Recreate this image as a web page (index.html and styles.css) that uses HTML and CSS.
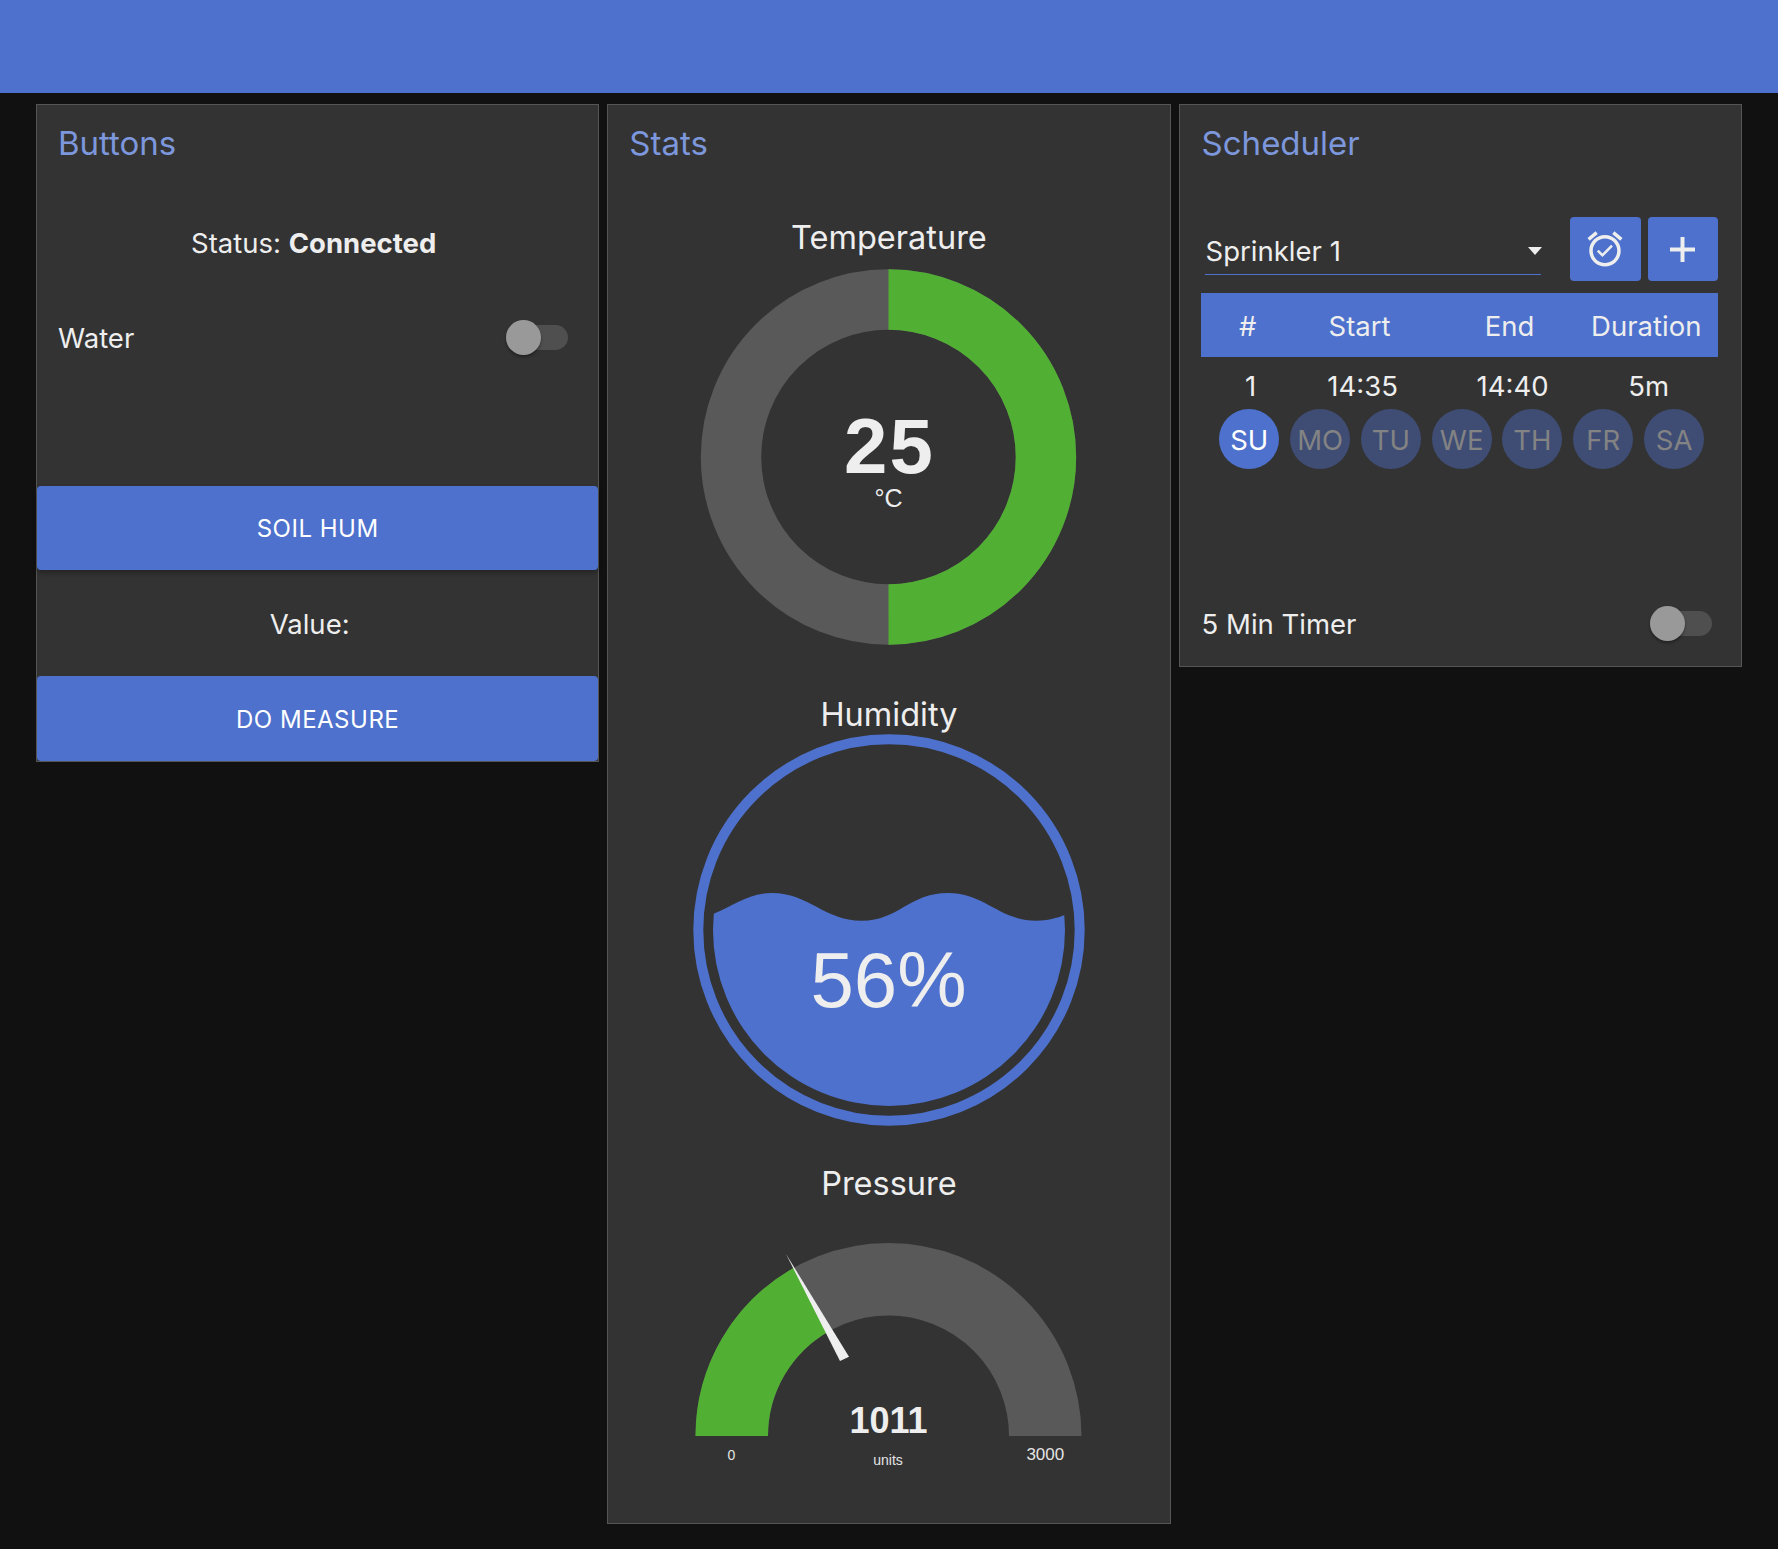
FILE: index.html
```html
<!DOCTYPE html>
<html>
    <head>
        <meta charset="utf-8">
        <meta name="viewport" content="width=device-width, initial-scale=1">
        <title>Garden Dashboard</title>
        <link rel="stylesheet" href="styles.css">
    </head>
    <body>
        <header class="topbar"></header>
        <main class="columns">
            <section class="card card-buttons">
                <h2 class="card-title">Buttons</h2>
                <p class="status">Status: <b>Connected</b></p>
                <div class="switch-row">
                    <span class="switch-label">Water</span>
                    <span class="switch"><span class="switch-thumb"></span></span>
                </div>
                <button class="wide-btn soil-btn">SOIL HUM</button>
                <p class="value">Value:</p>
                <button class="wide-btn measure-btn">DO MEASURE</button>
            </section>

            <section class="card card-stats">
                <h2 class="card-title">Stats</h2>

                <h3 class="chart-title first">Temperature</h3>
                <svg class="chart" width="440" height="404" viewBox="0 0 440 404">
                    <circle cx="219.5" cy="202" r="157.5" fill="none" stroke="#595959" stroke-width="60.4"/>
                    <path d="M219.5 44.5A157.5 157.5 0 0 1 219.5 359.5" fill="none" stroke="#51b033" stroke-width="60.4"/>
                    <text class="gauge-num temp-num" x="220.5" y="218" font-size="78">25</text>
                    <text class="gauge-txt" x="219.5" y="251.5" font-size="25">°C</text>
                </svg>

                <h3 class="chart-title">Humidity</h3>
                <svg class="chart" width="440" height="396" viewBox="0 0 440 396">
                    <defs>
                        <clipPath id="liquid-clip"><circle cx="220" cy="198" r="176"/></clipPath>
                    </defs>
                    <circle cx="220" cy="198" r="190.7" fill="none" stroke="#4d71cc" stroke-width="10"/>
                    <path clip-path="url(#liquid-clip)" fill="#4d71cc" d="M44 182C64 174 80 161 102.7 161C140 161 155 188.7 192.7 188.7C230 188.7 240 161 279 161C316 161 330 188.7 367.7 188.7C378 188.7 388 186 396 183L396 396L44 396Z"/>
                    <text class="gauge-txt" x="219.5" y="275" font-size="78">56%</text>
                </svg>

                <h3 class="chart-title">Pressure</h3>
                <svg class="chart chart-last" width="440" height="289" viewBox="0 0 440 289">
                    <path d="M62.75 235A156.75 156.75 0 0 1 376.25 235" fill="none" stroke="#595959" stroke-width="72.5"/>
                    <path d="M62.75 235A156.75 156.75 0 0 1 142.7 98.3" fill="none" stroke="#51b033" stroke-width="72.5"/>
                    <polygon points="117,53 180,155.7 171,160" fill="#eeeeee"/>
                    <text class="gauge-num" x="219.5" y="231.7" font-size="36">1011</text>
                    <text class="gauge-small" x="62.3" y="259" font-size="14">0</text>
                    <text class="gauge-small" x="219" y="264" font-size="14">units</text>
                    <text class="gauge-small" x="376.3" y="259" font-size="17">3000</text>
                </svg>
            </section>

            <section class="card card-sched">
                <h2 class="card-title">Scheduler</h2>
                <div class="sched-controls">
                    <div class="select">Sprinkler 1<span class="select-arrow"></span></div>
                    <button class="icon-btn alarm-btn">
                        <svg width="42" height="42" viewBox="0 0 24 24" fill="#eeeeee"><path d="M10.54 14.53L8.41 12.4l-1.06 1.06 3.18 3.18 6-6-1.06-1.06zM22 5.72l-4.6-3.86-1.29 1.53 4.6 3.86zM7.88 3.39L6.6 1.86 2 5.71l1.29 1.53zM12 4c-4.97 0-9 4.03-9 9s4.03 9 9 9 9-4.03 9-9-4.03-9-9-9zm0 16c-3.87 0-7-3.13-7-7s3.13-7 7-7 7 3.13 7 7-3.13 7-7 7z"/></svg>
                    </button>
                    <button class="icon-btn plus-btn">
                        <svg width="25" height="25" viewBox="0 0 25 25" fill="#eeeeee"><path d="M10.5 0h4v10.5H25v4H14.5V25h-4V14.5H0v-4h10.5z"/></svg>
                    </button>
                </div>
                <div class="sched-head">
                    <span>#</span><span>Start</span><span>End</span><span class="last-col">Duration</span>
                </div>
                <div class="sched-row">
                    <span>1</span><span>14:35</span><span>14:40</span><span class="last-col">5m</span>
                </div>
                <div class="days">
                    <span class="day on">SU</span>
                    <span class="day">MO</span>
                    <span class="day">TU</span>
                    <span class="day">WE</span>
                    <span class="day">TH</span>
                    <span class="day">FR</span>
                    <span class="day">SA</span>
                </div>
                <div class="switch-row timer-row">
                    <span class="switch-label">5 Min Timer</span>
                    <span class="switch"><span class="switch-thumb"></span></span>
                </div>
            </section>
        </main>
    </body>
</html>
```

FILE: styles.css
```css
*, ::after, ::before {
    box-sizing: border-box;
}
body {
    margin: 0;
    background: #111111;
    color: #eeeeee;
    font-family: "Inter", "Liberation Sans", sans-serif;
    font-size: 27.5px;
    line-height: 34px;
}
.topbar {
    height: 93px;
    background: #4d71cc;
}
.columns {
    display: grid;
    grid-template-columns: repeat(3, 563.3px);
    column-gap: 8px;
    align-items: start;
    padding: 11px 36px 26px;
}
.card {
    background: #333333;
    border: 1px solid #555555;
}
.card-title {
    margin: 20px 0 0 21px;
    font-size: 33px;
    line-height: 36px;
    font-weight: 400;
    color: #7d97dc;
}
.card-sched .card-title {
    margin-left: 22px;
}

/* buttons card */
.status {
    margin: 65px 0 0;
    padding-right: 8px;
    text-align: center;
}
.switch-row {
    display: flex;
    justify-content: space-between;
    align-items: center;
    height: 36px;
    margin: 59px 30px 0 21px;
}
.switch-label {
    padding-top: 2px;
}
.switch {
    position: relative;
    display: block;
    width: 62px;
    height: 25px;
    border-radius: 13px;
    background: #4f4f4f;
}
.switch-thumb {
    position: absolute;
    left: 0;
    top: -5px;
    width: 35px;
    height: 35px;
    border-radius: 50%;
    background: #999999;
    box-shadow: 0 2px 3px rgba(0, 0, 0, 0.35);
}
.wide-btn {
    display: block;
    width: 100%;
    border: 0;
    border-radius: 4px;
    background: #4d71cc;
    color: #ffffff;
    font-family: inherit;
    font-size: 24px;
    letter-spacing: 0.5px;
}
.soil-btn {
    height: 84px;
    margin-top: 131px;
    box-shadow: 0 3px 5px rgba(0, 0, 0, 0.3);
}
.value {
    margin: 37px 0 35px;
    padding-right: 16px;
    text-align: center;
}
.measure-btn {
    height: 85px;
    padding-top: 2px;
}

/* stats card */
.chart-title {
    margin: 39px 0 0;
    font-size: 32.5px;
    line-height: 34px;
    font-weight: 400;
    text-align: center;
}
.chart-title.first {
    margin-top: 60px;
}
.chart {
    display: block;
    margin: 0 auto;
}
.chart-last {
    margin-bottom: 33px;
}
.chart text {
    text-anchor: middle;
    font-family: "Liberation Sans", sans-serif;
    fill: #eeeeee;
}
.chart .gauge-num {
    font-weight: bold;
}
.chart .temp-num {
    letter-spacing: 2px;
}
.chart .gauge-small {
    fill: #e4e4e4;
}

/* scheduler card */
.sched-controls {
    display: flex;
    align-items: flex-start;
    margin: 56px 23px 0 21px;
}
.select {
    position: relative;
    width: 336px;
    height: 58px;
    margin: 0 29px 0 4px;
    padding: 17px 0 0 1px;
    border-bottom: 1px solid #4d71cc;
}
.select-arrow {
    position: absolute;
    right: -1px;
    top: 30px;
    border-left: 7px solid transparent;
    border-right: 7px solid transparent;
    border-top: 8px solid #eeeeee;
}
.icon-btn {
    display: flex;
    align-items: center;
    justify-content: center;
    height: 64px;
    padding: 0;
    border: 0;
    border-radius: 4px;
    background: #4d71cc;
}
.alarm-btn {
    width: 71px;
    margin-right: 7px;
}
.plus-btn {
    width: 70px;
}
.sched-head, .sched-row {
    display: grid;
    grid-template-columns: 94px 130px 170px 1fr;
    margin: 0 23px 0 21px;
    text-align: center;
}
.sched-head {
    height: 64px;
    margin-top: 12px;
    padding-top: 2px;
    align-items: center;
    background: #4d71cc;
}
.sched-row {
    height: 52px;
    padding: 12px 0 0 3px;
}
.last-col {
    padding-right: 18px;
}
.sched-head .last-col {
    margin-left: -8px;
    padding-right: 12px;
}
.days {
    display: flex;
    gap: 10.8px;
    margin: 0 0 0 39.7px;
}
.day {
    display: flex;
    align-items: center;
    justify-content: center;
    width: 60px;
    height: 60px;
    padding-top: 2px;
    border-radius: 50%;
    background: #3f4d75;
    color: #838383;
}
.day.on {
    background: #4d71cc;
    color: #ffffff;
}
.timer-row {
    margin: 136px 29px 25px 22px;
}
```
